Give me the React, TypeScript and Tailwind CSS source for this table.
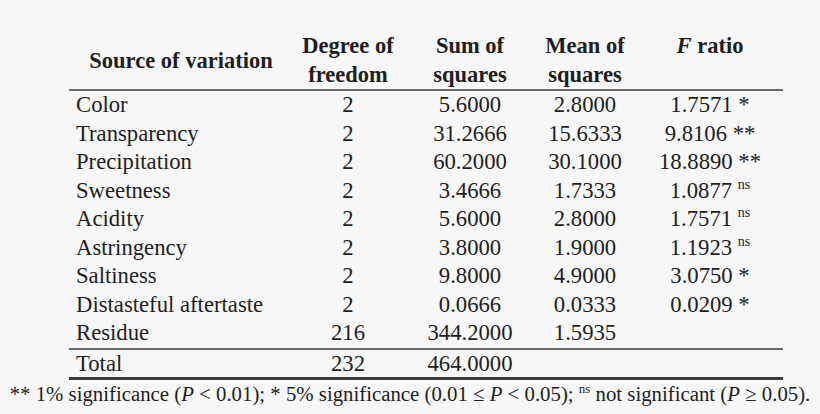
const rows: [string, string, string, string, string, string][] = [
  ["Color", "2", "5.6000", "2.8000", "1.7571", "*"],
  ["Transparency", "2", "31.2666", "15.6333", "9.8106", "**"],
  ["Precipitation", "2", "60.2000", "30.1000", "18.8890", "**"],
  ["Sweetness", "2", "3.4666", "1.7333", "1.0877", "ns"],
  ["Acidity", "2", "5.6000", "2.8000", "1.7571", "ns"],
  ["Astringency", "2", "3.8000", "1.9000", "1.1923", "ns"],
  ["Saltiness", "2", "9.8000", "4.9000", "3.0750", "*"],
  ["Distasteful aftertaste", "2", "0.0666", "0.0333", "0.0209", "*"],
  ["Residue", "216", "344.2000", "1.5935", "", ""],
];

const cols = "grid grid-cols-[220px_118px_126px_104px_146px]";

function Ratio({ value, mark }: { value: string; mark: string }) {
  if (!value) return null;
  if (mark === "ns")
    return (
      <span>
        {value}{" "}
        <sup className="text-[14px] relative -top-[9px]">ns</sup>
      </span>
    );
  return (
    <span>
      {value} {mark}
    </span>
  );
}

export default function App() {
  return (
    <div
      className="w-[820px] h-[414px] bg-[#f7f7f7] text-[#1e1e1e] overflow-hidden"
      style={{ fontFamily: '"Liberation Serif", "Times New Roman", serif' }}>
      <div className="pt-[31px] pl-[69px]">
        <div className="w-[714px]">
          <div
            className={`${cols} font-bold text-[22.5px] leading-[29px] border-b-2 border-[#6a6a6a]`}>
            <div className="flex items-center justify-center pl-[4px]">
              Source of variation
            </div>
            <div className="text-center">
              Degree of
              <br />
              freedom
            </div>
            <div className="text-center">
              Sum of
              <br />
              squares
            </div>
            <div className="text-center">
              Mean of
              <br />
              squares
            </div>
            <div className="text-center">
              <i>F</i> ratio
            </div>
          </div>
          <div className="text-[22.7px] leading-[28.5px]">
            {rows.map((r) => (
              <div key={r[0]} className={cols}>
                <div className="pl-[7px]">{r[0]}</div>
                <div className="text-center">{r[1]}</div>
                <div className="text-center">{r[2]}</div>
                <div className="text-center">{r[3]}</div>
                <div className="text-center">
                  <Ratio value={r[4]} mark={r[5]} />
                </div>
              </div>
            ))}
          </div>
          <div
            className={`${cols} text-[22.7px] leading-[27px] border-t-2 border-b-[3px] border-t-[#6a6a6a] border-b-[#3a3a3a]`}>
            <div className="pl-[7px]">Total</div>
            <div className="text-center">232</div>
            <div className="text-center">464.0000</div>
            <div />
            <div />
          </div>
        </div>
      </div>
      <div className="text-center text-[20.8px] leading-[28px]">
        ** 1% significance (<i>P</i> &lt; 0.01); * 5% significance (0.01 ≤{" "}
        <i>P</i> &lt; 0.05);{" "}
        <sup className="text-[13px] relative -top-[8px]">ns</sup> not
        significant (<i>P</i> ≥ 0.05).
      </div>
    </div>
  );
}
